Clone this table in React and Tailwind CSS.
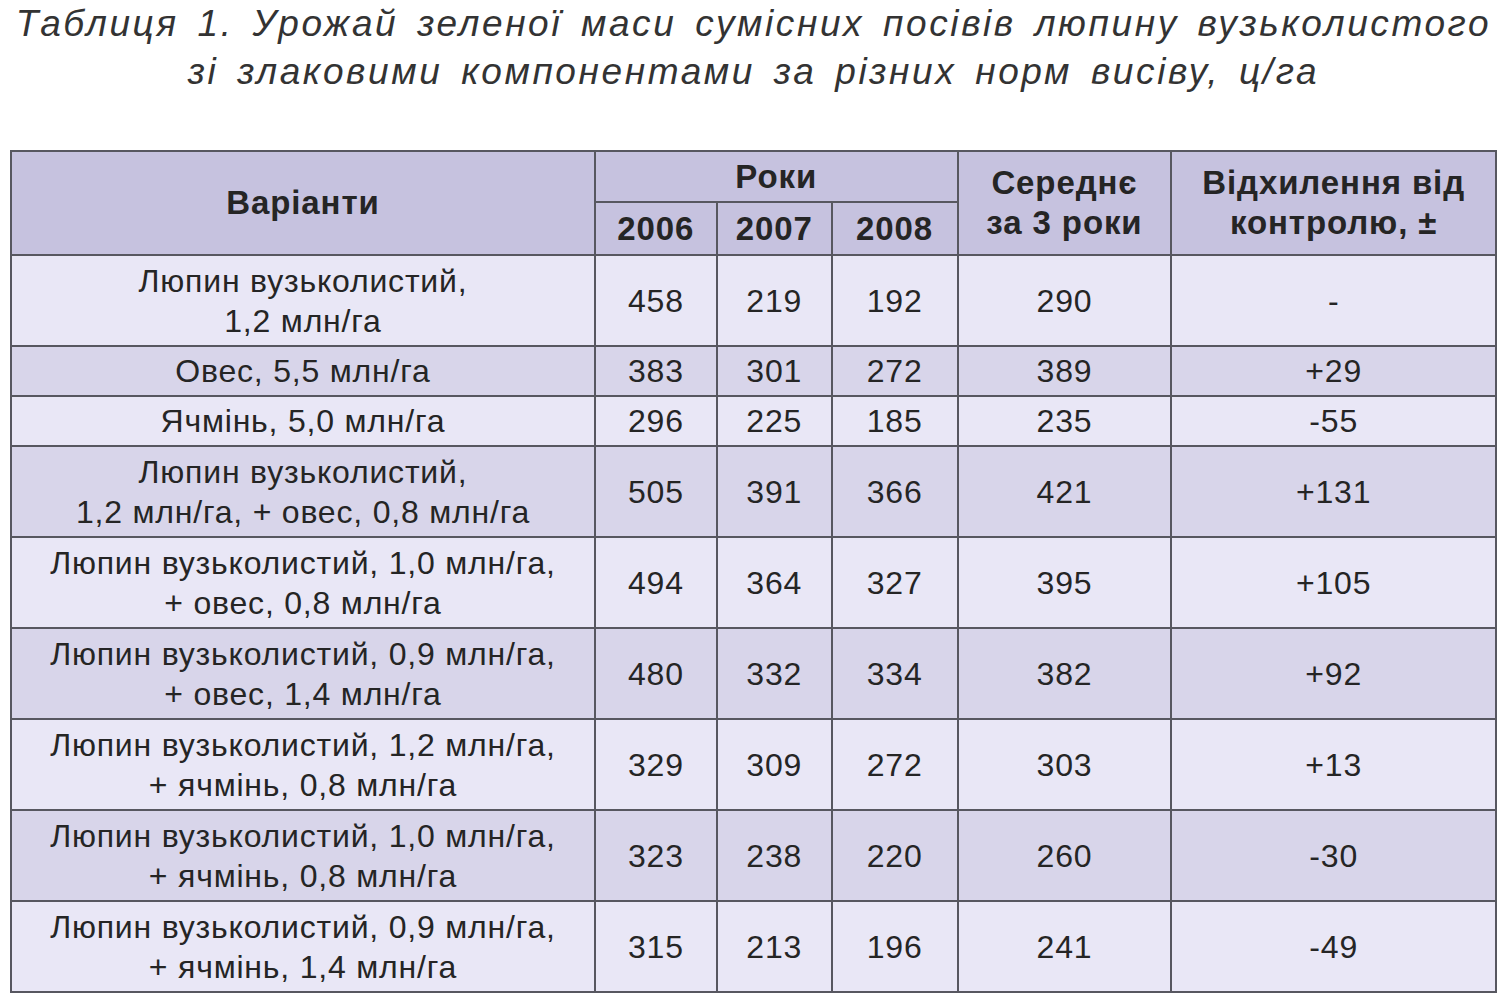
const rows = [
  { name: ["Люпин вузьколистий,", "1,2 млн/га"], v: ["458", "219", "192", "290", "-"], tall: true },
  { name: ["Овес, 5,5 млн/га"], v: ["383", "301", "272", "389", "+29"] },
  { name: ["Ячмінь, 5,0 млн/га"], v: ["296", "225", "185", "235", "-55"] },
  { name: ["Люпин вузьколистий,", "1,2 млн/га, + овес, 0,8 млн/га"], v: ["505", "391", "366", "421", "+131"], tall: true },
  { name: ["Люпин вузьколистий, 1,0 млн/га,", "+ овес, 0,8 млн/га"], v: ["494", "364", "327", "395", "+105"], tall: true },
  { name: ["Люпин вузьколистий, 0,9 млн/га,", "+ овес, 1,4 млн/га"], v: ["480", "332", "334", "382", "+92"], tall: true },
  { name: ["Люпин вузьколистий, 1,2 млн/га,", "+ ячмінь, 0,8 млн/га"], v: ["329", "309", "272", "303", "+13"], tall: true },
  { name: ["Люпин вузьколистий, 1,0 млн/га,", "+ ячмінь, 0,8 млн/га"], v: ["323", "238", "220", "260", "-30"], tall: true },
  { name: ["Люпин вузьколистий, 0,9 млн/га,", "+ ячмінь, 1,4 млн/га"], v: ["315", "213", "196", "241", "-49"], tall: true },
];

const cell = "border-2 border-[#575760] text-center align-middle p-0";

export default function App() {
  return (
    <div className="w-[1507px] h-[1000px] bg-white text-[#252525] font-[Liberation_Sans,Arial,sans-serif]">
      <div className="text-center italic text-[37px] leading-[48px] tracking-[2.6px] [word-spacing:6px] text-[#333]">
        <div>Таблиця 1. Урожай зеленої маси сумісних посівів люпину вузьколистого</div>
        <div>зі злаковими компонентами за різних норм висіву, ц/га</div>
      </div>
      <table className="ml-[10px] mt-[54px] w-[1487px] border-collapse text-[32px] leading-[40px] tracking-[0.8px]">
        <colgroup>
          <col className="w-[585px]" />
          <col className="w-[122px]" />
          <col className="w-[115px]" />
          <col className="w-[126px]" />
          <col className="w-[214px]" />
          <col className="w-[325px]" />
        </colgroup>
        <thead className="bg-[#c6c2df] font-bold text-[33px] tracking-[0.9px]">
          <tr className="h-[51px]">
            <th rowSpan={2} className={cell}>Варіанти</th>
            <th colSpan={3} className={cell}>Роки</th>
            <th rowSpan={2} className={cell}>
              Середнє
              <br />
              за 3 роки
            </th>
            <th rowSpan={2} className={cell}>
              Відхилення від
              <br />
              контролю, ±
            </th>
          </tr>
          <tr className="h-[53px]">
            <th className={cell}>2006</th>
            <th className={cell}>2007</th>
            <th className={cell}>2008</th>
          </tr>
        </thead>
        <tbody>
          {rows.map((r, i) => (
            <tr
              key={i}
              className={`${r.tall ? "h-[91px]" : "h-[50px]"} ${i % 2 === 0 ? "bg-[#e9e7f6]" : "bg-[#d8d5ea]"}`}
            >
              <td className={cell}>
                {r.name.map((l, j) => (
                  <div key={j}>{l}</div>
                ))}
              </td>
              {r.v.map((v, j) => (
                <td key={j} className={cell}>
                  {v}
                </td>
              ))}
            </tr>
          ))}
        </tbody>
      </table>
    </div>
  );
}
